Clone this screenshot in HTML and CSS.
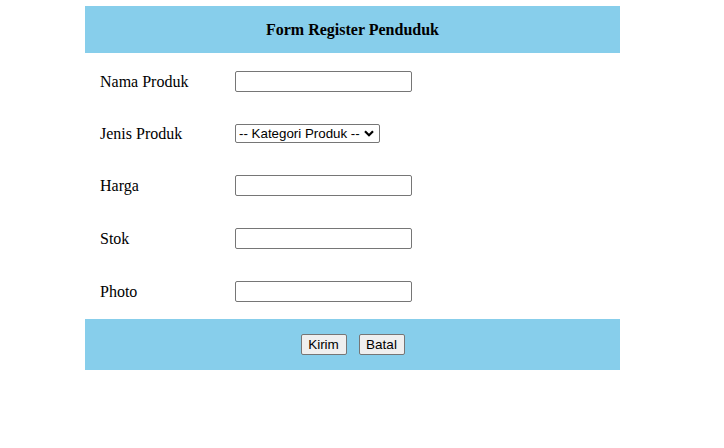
FILE: index.html
```html
<!DOCTYPE html>
<html>
<head>
<meta charset="utf-8">
<title>Form Register Penduduk</title>
<link rel="stylesheet" href="styles.css">
</head>
<body>
<form class="form">
  <div class="header">Form Register Penduduk</div>
  <div class="rows">
    <div class="row">
      <span class="label">Nama Produk</span>
      <input class="field" type="text">
    </div>
    <div class="row row-select">
      <span class="label">Jenis Produk</span>
      <span class="select-wrap">
        <select class="select">
          <option>-- Kategori Produk --</option>
        </select>
        <svg class="chevron" width="10" height="7" viewBox="0 0 10 7"><path d="M1 1.2 L5 5.2 L9 1.2" fill="none" stroke="#000" stroke-width="2.2"/></svg>
      </span>
    </div>
    <div class="row">
      <span class="label">Harga</span>
      <input class="field" type="text">
    </div>
    <div class="row">
      <span class="label">Stok</span>
      <input class="field" type="text">
    </div>
    <div class="row">
      <span class="label">Photo</span>
      <input class="field" type="text">
    </div>
  </div>
  <div class="footer">
    <button class="btn" type="button">Kirim</button>
    <button class="btn" type="button">Batal</button>
  </div>
</form>
</body>
</html>
```
FILE: styles.css
```css
html, body {
  margin: 0;
  padding: 0;
  background: #fff;
}
body {
  font-family: "Liberation Serif", "Times New Roman", serif;
  font-size: 16px;
  color: #000;
}
.form {
  width: 535px;
  margin: 6px 0 0 85px;
}
.header {
  height: 47px;
  background: #87ceeb;
  display: flex;
  align-items: center;
  justify-content: center;
  font-weight: bold;
  font-size: 16px;
}
.rows {
  padding-top: 2px;
}
.row {
  display: grid;
  grid-template-columns: 135px 1fr;
  align-items: center;
  height: 53px;
  padding-left: 15px;
}
.row-select {
  height: 51px;
}
.label {
  line-height: 18px;
}
.field {
  box-sizing: border-box;
  width: 177px;
  height: 21px;
  margin: 0;
  padding: 1px 2px;
  border: 1px solid #767676;
  border-radius: 2px;
  background: #fff;
  font-family: "Liberation Sans", Arial, sans-serif;
  font-size: 13.33px;
}
.select-wrap {
  position: relative;
  display: inline-block;
  width: 145px;
  height: 19px;
}
.select {
  -webkit-appearance: none;
  appearance: none;
  box-sizing: border-box;
  width: 145px;
  height: 19px;
  margin: 0;
  padding: 0 0 0 3px;
  border: 1px solid #767676;
  border-radius: 2px;
  background: #fff;
  color: #000;
  font-family: "Liberation Sans", Arial, sans-serif;
  font-size: 13.33px;
  line-height: 17px;
}
.chevron {
  position: absolute;
  left: 129px;
  top: 6px;
  pointer-events: none;
}
.footer {
  margin-top: 1px;
  height: 51px;
  background: #87ceeb;
  display: flex;
  align-items: center;
  justify-content: center;
  gap: 12px;
}
.btn {
  box-sizing: border-box;
  width: 46px;
  height: 21px;
  margin: 0;
  padding: 0;
  border: 1px solid #767676;
  border-radius: 2px;
  background: #efefef;
  color: #000;
  font-family: "Liberation Sans", Arial, sans-serif;
  font-size: 13.5px;
}
```
